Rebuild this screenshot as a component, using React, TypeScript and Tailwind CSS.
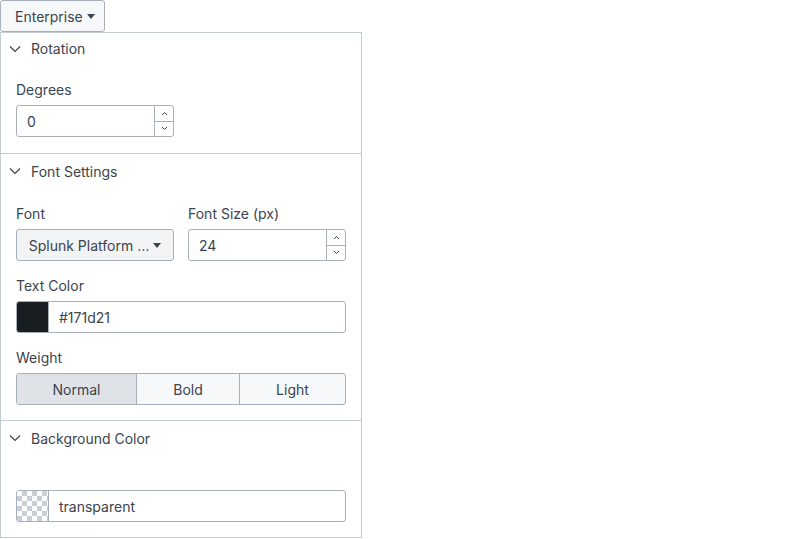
import React from "react";

const Chevron = () => (
  <svg width="12" height="12" viewBox="0 0 12 12" className="text-[#3c444d]">
    <path d="M1 3.5l5 5 5-5" fill="none" stroke="currentColor" strokeWidth="1.2" />
  </svg>
);

const Caret = () => (
  <svg width="8" height="5" viewBox="0 0 8 5" className="ml-[4px]">
    <path d="M0 0h8L4 5z" fill="#3c444d" />
  </svg>
);

const Spinner = () => (
  <div className="flex flex-col w-[19px] border-l border-[#a7b0ba]">
    <div className="flex-1 flex items-center justify-center border-b border-[#a7b0ba]">
      <svg width="7" height="5" viewBox="0 0 7 5">
        <path d="M1 4l2.5-2.5L6 4" fill="none" stroke="#3c444d" strokeWidth="1" />
      </svg>
    </div>
    <div className="flex-1 flex items-center justify-center">
      <svg width="7" height="5" viewBox="0 0 7 5">
        <path d="M1 1l2.5 2.5L6 1" fill="none" stroke="#3c444d" strokeWidth="1" />
      </svg>
    </div>
  </div>
);

const NumberInput = ({ value }: { value: string }) => (
  <div className="flex h-[32px] w-[158px] border border-[#a7b0ba] rounded-[3px] bg-white">
    <div className="flex-1 flex items-center px-[10px]">{value}</div>
    <Spinner />
  </div>
);

const Header = ({ title, tight }: { title: string; tight?: boolean }) => (
  <div className={`flex items-center pl-[8px] gap-[10px] ${tight ? "h-[32px] pb-px" : "h-[34px]"}`}>
    <Chevron />
    <span>{title}</span>
  </div>
);

const Label = ({ children }: { children: React.ReactNode }) => (
  <div className="h-[24px] mb-[4px] flex items-center">{children}</div>
);

const checker =
  "bg-[repeating-conic-gradient(#c8cfd6_0%_25%,#ffffff_0%_50%)] bg-[length:10px_10px]";

export default function App() {
  return (
    <div className="font-['Inter',sans-serif] text-[14px] text-[#3c444d] bg-white w-[800px] h-[539px]">
      <button className="flex items-center h-[32px] w-[105px] pl-[14px] border border-[#a7b0ba] rounded-[3px] bg-[#f7f8fa]">
        Enterprise
        <Caret />
      </button>
      <div className="w-[362px] border border-[#c3cbd4] border-t-0">
        <div className="border-t border-[#c3cbd4]">
          <Header title="Rotation" tight />
          <div className="px-[15px] pt-[12px] pb-[16px]">
            <Label>Degrees</Label>
            <NumberInput value="0" />
          </div>
        </div>
        <div className="border-t border-[#c3cbd4]">
          <Header title="Font Settings" />
          <div className="px-[15px] pt-[13px] pb-[15px] flex flex-col gap-[12px]">
            <div className="flex gap-[14px]">
              <div>
                <Label>Font</Label>
                <div className="flex items-center justify-center h-[32px] w-[158px] border border-[#a7b0ba] rounded-[3px] bg-[#f1f3f5]">
                  Splunk Platform …
                  <Caret />
                </div>
              </div>
              <div>
                <Label>Font Size (px)</Label>
                <NumberInput value="24" />
              </div>
            </div>
            <div>
              <Label>Text Color</Label>
              <div className="flex h-[32px] w-[330px] border border-[#a7b0ba] rounded-[3px] overflow-hidden">
                <div className="w-[32px] bg-[#171d21] border-r border-[#a7b0ba]" />
                <div className="flex items-center px-[10px]">#171d21</div>
              </div>
            </div>
            <div>
              <Label>Weight</Label>
              <div className="flex h-[32px] w-[330px] border border-[#a7b0ba] rounded-[3px] overflow-hidden bg-[#f7f8fa]">
                <div className="w-[120px] flex items-center justify-center bg-[#dfe3e8] border-r border-[#a7b0ba]">Normal</div>
                <div className="w-[103px] flex items-center justify-center border-r border-[#a7b0ba]">Bold</div>
                <div className="flex-1 flex items-center justify-center">Light</div>
              </div>
            </div>
          </div>
        </div>
        <div className="border-t border-[#c3cbd4]">
          <Header title="Background Color" />
          <div className="px-[15px] pt-[35px] pb-[15px]">
            <div className="flex h-[32px] w-[330px] border border-[#a7b0ba] rounded-[3px] overflow-hidden">
              <div className={`w-[32px] border-r border-[#a7b0ba] ${checker}`} />
              <div className="flex items-center px-[10px]">transparent</div>
            </div>
          </div>
        </div>
      </div>
    </div>
  );
}
